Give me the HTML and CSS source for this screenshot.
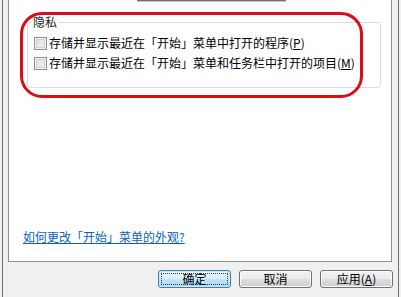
FILE: index.html
```html
<!DOCTYPE html>
<html lang="zh-CN">
<head>
    <meta charset="UTF-8">
    <title>自定义「开始」菜单</title>
    <link rel="stylesheet" href="styles.css">
</head>
<body>
    <div class="window">
        <div class="panel">
            <div class="top-edge"></div>

            <div class="group">
                <span class="group-title">隐私</span>
                <label class="check-row">
                    <span class="checkbox"></span>
                    <span>存储并显示最近在「开始」菜单中打开的程序(<u>P</u>)</span>
                </label>
                <label class="check-row">
                    <span class="checkbox"></span>
                    <span>存储并显示最近在「开始」菜单和任务栏中打开的项目(<u>M</u>)</span>
                </label>
            </div>

            <a class="help-link" href="#">如何更改「开始」菜单的外观?</a>
        </div>

        <div class="buttons">
            <button class="btn btn-default"><span class="focus">确定</span></button>
            <button class="btn">取消</button>
            <button class="btn">应用(<u>A</u>)</button>
        </div>

        <!-- red marker drawn over the privacy group -->
        <div class="highlight"></div>
    </div>
</body>
</html>
```

FILE: styles.css
```css
html, body {
    margin: 0;
    padding: 0;
}

body {
    width: 401px;
    height: 297px;
    overflow: hidden;
    background: #f0f0f0;
    font-family: "Noto Sans CJK SC", sans-serif;
    font-size: 12px;
    color: #000;
}

.window {
    position: relative;
    margin-left: 2px;
    width: 395px;
    height: 297px;
    border-left: 1px solid #6f6f6f;
    border-right: 1px solid #6f6f6f;
    contain: paint;
}

.panel {
    margin: 0 6px 0 5px;
    padding: 0 0 17px 14px;
    background: #fff;
    border: 1px solid #8e8f8f;
    border-top: none;
}

.top-edge {
    margin-left: 114px;
    width: 149px;
    height: 2px;
    background: #707070;
    border-bottom: 1px solid #c8c8c8;
    box-sizing: border-box;
}

.group {
    margin: 20px 10px 0 4px;
    padding: 0 6px 14px;
    border: 1px solid #d5dfe5;
    border-radius: 3px;
}

.group-title {
    display: block;
    width: max-content;
    margin: -8px 0 4px -2px;
    padding: 0 1px;
    line-height: 14px;
    background: #fff;
    color: #1e1e1e;
}

.check-row {
    display: flex;
    align-items: center;
    height: 20px;
    line-height: 14px;
    white-space: nowrap;
}

.checkbox {
    width: 11px;
    height: 11px;
    margin-right: 2px;
    border: 1px solid #8f8f8f;
    background: linear-gradient(135deg, #dcdcdc, #f6f6f6);
    box-shadow: inset 0 0 0 1px #f4f4f4, inset 0 0 0 2px #d2d2d2;
    flex-shrink: 0;
}

.help-link {
    display: block;
    margin-top: 142px;
    line-height: 14px;
    color: #0b62b8;
    text-decoration: underline;
}

.buttons {
    display: flex;
    justify-content: flex-end;
    gap: 8px;
    margin-top: 8px;
    padding-right: 5px;
}

.btn {
    width: 73px;
    height: 18px;
    padding: 0;
    font-family: inherit;
    font-size: 12px;
    line-height: 14px;
    color: #000;
    border: 1px solid #707070;
    border-radius: 3px;
    background: linear-gradient(#f2f2f2 0%, #ebebeb 50%, #dddddd 51%, #cfcfcf 100%);
    box-shadow: inset 0 0 0 1px #fcfcfc;
}

.btn-default {
    border-color: #3c7fb1;
    background: linear-gradient(#eaf6fd 0%, #d9f0fc 50%, #bee6fd 51%, #a7d9f5 100%);
    box-shadow: inset 0 0 0 1px #c8e8fa;
    padding: 2px;
}

.btn-default .focus {
    display: block;
    height: 100%;
    box-sizing: border-box;
    border: 1px dotted #3a3a3a;
    line-height: 10px;
}

.highlight {
    position: absolute;
    left: 17px;
    top: 12px;
    width: 337px;
    height: 80px;
    border: 3px solid #dc0c16;
    border-radius: 22px;
    pointer-events: none;
}
```
